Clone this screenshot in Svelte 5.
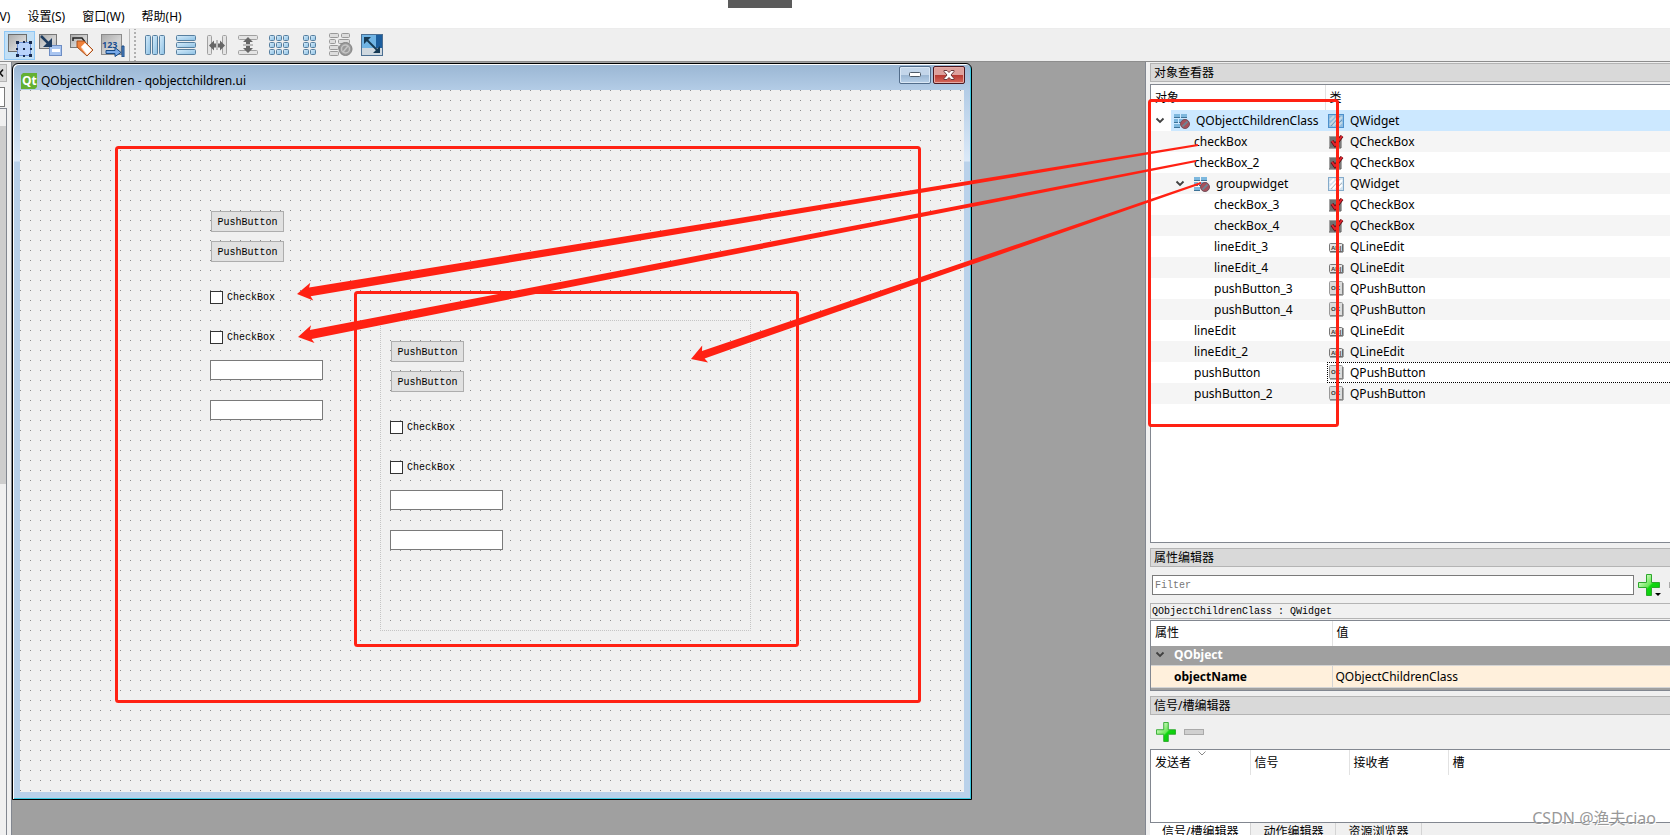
<script lang="ts">
  type Kind = 'widget' | 'check' | 'line' | 'push';
  type Row = { name: string; cls: string; kind: Kind; level: number; parent?: boolean };

  const menus = ['(V)', '设置(S)', '窗口(W)', '帮助(H)'];

  const rows: Row[] = [
    { name: 'QObjectChildrenClass', cls: 'QWidget', kind: 'widget', level: 0, parent: true },
    { name: 'checkBox', cls: 'QCheckBox', kind: 'check', level: 1 },
    { name: 'checkBox_2', cls: 'QCheckBox', kind: 'check', level: 1 },
    { name: 'groupwidget', cls: 'QWidget', kind: 'widget', level: 1, parent: true },
    { name: 'checkBox_3', cls: 'QCheckBox', kind: 'check', level: 2 },
    { name: 'checkBox_4', cls: 'QCheckBox', kind: 'check', level: 2 },
    { name: 'lineEdit_3', cls: 'QLineEdit', kind: 'line', level: 2 },
    { name: 'lineEdit_4', cls: 'QLineEdit', kind: 'line', level: 2 },
    { name: 'pushButton_3', cls: 'QPushButton', kind: 'push', level: 2 },
    { name: 'pushButton_4', cls: 'QPushButton', kind: 'push', level: 2 },
    { name: 'lineEdit', cls: 'QLineEdit', kind: 'line', level: 1 },
    { name: 'lineEdit_2', cls: 'QLineEdit', kind: 'line', level: 1 },
    { name: 'pushButton', cls: 'QPushButton', kind: 'push', level: 1 },
    { name: 'pushButton_2', cls: 'QPushButton', kind: 'push', level: 1 },
  ];

  const editTools = ['Edit Widgets', 'Edit Signals/Slots', 'Edit Buddies', 'Edit Tab Order'];
  const layoutTools = [
    'Lay Out Horizontally',
    'Lay Out Vertically',
    'Horizontal Splitter',
    'Vertical Splitter',
    'Lay Out in a Grid',
    'Form Layout',
    'Break Layout',
    'Adjust Size',
  ];

  let activeTool = $state('Edit Widgets');
  let selected = $state(0);
  let filter = $state('');
  let objectName = $state('QObjectChildrenClass');
  let tab = $state('信号/槽编辑器');

  // tapered arrow polygon, thin at the tail and wide at the head
  function arrow(tailX: number, tailY: number, tipX: number, tipY: number, thick: number) {
    const len = Math.hypot(tailX - tipX, tailY - tipY);
    const ux = (tailX - tipX) / len;
    const uy = (tailY - tipY) / len;
    const at = (along: number, side: number) =>
      `${(tipX + ux * along - uy * side).toFixed(1)},${(tipY + uy * along + ux * side).toFixed(1)}`;
    return [
      at(0, 0), at(15, -9), at(13, -thick / 2), at(len, -1),
      at(len, 1), at(13, thick / 2), at(15, 9),
    ].join(' ');
  }

  const arrows = [
    arrow(1198, 145, 297, 294, 9),
    arrow(1196, 161, 298, 337, 9),
    arrow(1201, 183, 691, 359, 8),
  ];
</script>

{#snippet plus(size: number)}
  <svg width={size} height={size} viewBox="0 0 22 22">
    <defs>
      <linearGradient id="green" x1="0" y1="0" x2="1" y2="1">
        <stop offset="0.2" stop-color="#c8f8b8" />
        <stop offset="0.5" stop-color="#6be85a" />
        <stop offset="0.56" stop-color="#10d810" />
        <stop offset="1" stop-color="#08c408" />
      </linearGradient>
    </defs>
    <path d="M8.5.5h5v8h8v5h-8v8h-5v-8h-8v-5h8z" fill="url(#green)" stroke="#2ca82c" />
  </svg>
{/snippet}

{#snippet chevron()}
  <svg class="chevron" width="10" height="8" viewBox="0 0 10 8">
    <path d="M1.5 1.500l3.5 3.500 3.500-3.500" fill="none" stroke="#404040" stroke-width="1.800" />
  </svg>
{/snippet}

{#snippet toolIcon(name: string)}
  <svg width="24" height="24" viewBox="0 0 24 24">
    {#if name === 'Edit Widgets'}
      <rect x="0.5" y="1.500" width="18" height="17" fill="url(#grey)" stroke="#6b6b6b" />
      <rect x="9.500" y="9.500" width="13" height="13" fill="#b9d3fb" stroke="#6f93d8" />
      <path d="M8 8h3v3h-3zM15 8h2v2h-2zM21 8h3v3h-3zM8 15h2v2h-2zM22 15h2v2h-2zM8 21h3v3h-3zM15 22h2v2h-2zM21 21h3v3h-3zM15 15h2v2h-2z" fill="#17294d" />
    {:else if name === 'Edit Signals/Slots'}
      <rect x="0.5" y="1.500" width="17" height="14" fill="url(#grey)" stroke="#777" />
      <rect x="10.500" y="12.500" width="12" height="10" fill="#a9c5f0" stroke="#6d8dc4" />
      <path d="M13 16h8v3h-8z" fill="#fff" />
      <path d="M2 3l9 9" stroke="#1e3c60" stroke-width="2.500" />
      <path d="M13 5v9H4z" fill="#1e3c60" />
    {:else if name === 'Edit Buddies'}
      <rect x="0.5" y="1.500" width="17" height="13" fill="url(#grey)" stroke="#777" />
      <path d="M3 8V5h9l3 4" fill="none" stroke="#222" stroke-width="1.500" />
      <path d="M7 8h7l9 9-6 6-10-9z" fill="#f0823c" stroke="#a8501c" />
      <path d="M11 14l4-4 7 7-5 5z" fill="#fff" stroke="#ffd0b0" />
    {:else if name === 'Edit Tab Order'}
      <rect x="0.500" y="1.500" width="20" height="20" fill="url(#grey)" stroke="#8b8b8b" />
      <text x="1" y="15" class="digits">123</text>
      <path d="M5 17.500h9v-3l6 5-6 4v-3H5z" fill="#78a9e8" stroke="#174a86" />
      <path d="M21 13h2v11h-2z" fill="#5c8dce" stroke="#174a86" />
    {:else if name === 'Lay Out Horizontally'}
      {#each [2.500, 9.500, 16.500] as x}
        <rect {x} y="2.500" width="5" height="19" rx="1" fill="url(#blue)" stroke="#577f9f" />
      {/each}
    {:else if name === 'Lay Out Vertically'}
      {#each [2.500, 9.500, 16.500] as y}
        <rect x="2.500" {y} width="19" height="5" rx="1" fill="url(#blue)" stroke="#577f9f" />
      {/each}
    {:else if name === 'Horizontal Splitter'}
      {#each [2.500, 17.500] as x}
        <rect {x} y="2.500" width="4" height="19" rx="1" fill="#e4e4e4" stroke="#a0a0a0" />
      {/each}
      <path d="M12 7v10" stroke="#888" />
      <path d="M4 12.500l5-5v3h2v4H9v3zM20 12.500l-5-5v3h-2v4h2v3z" fill="#666" />
    {:else if name === 'Vertical Splitter'}
      {#each [2.500, 17.500] as y}
        <rect x="2.500" {y} width="19" height="4" rx="1" fill="#e4e4e4" stroke="#a0a0a0" />
      {/each}
      <path d="M7 12h10" stroke="#888" />
      <path d="M12 4l5 5h-3v2h-4V9H7zM12 20l5-5h-3v-2h-4v2H7z" fill="#666" />
    {:else if name === 'Lay Out in a Grid'}
      {#each [2.500, 9.500, 16.500] as x}
        {#each [2.500, 9.500, 16.500] as y}
          <rect {x} {y} width="5" height="5" rx="1" fill="url(#blue)" stroke="#577f9f" />
        {/each}
      {/each}
    {:else if name === 'Form Layout'}
      {#each [2.500, 9.500, 16.500] as y}
        <rect x="5.500" {y} width="5" height="5" rx="1" fill="url(#blue)" stroke="#577f9f" />
        <rect x="12.500" {y} width="5" height="5" rx="1" fill="url(#blue)" stroke="#577f9f" />
      {/each}
    {:else if name === 'Break Layout'}
      {#each [0.5, 6.500, 12.500, 18.500] as y, i}
        <rect x="0.5" {y} width={i === 1 ? 6 : 9} height="4" rx="1" fill="#ddd" stroke="#999" />
        {#if i < 2}
          <rect x={i === 1 ? 9.500 : 12.500} {y} width={i === 1 ? 11 : 8} height="4" rx="1" fill="#ddd" stroke="#999" />
        {/if}
      {/each}
      <circle cx="16.500" cy="16" r="6.500" fill="#999" stroke="#848484" />
      <circle cx="16.500" cy="16" r="4" fill="none" stroke="#c4c4c4" stroke-width="1.500" />
      <path d="M14 19l5-6" stroke="#c4c4c4" stroke-width="1.500" />
    {:else}
      <rect x="1.500" y="1.500" width="21" height="21" fill="#cfd8df" stroke="#4c6f92" />
      <path d="M2 2h20v13h-6V2z" fill="#1c5e9e" />
      <path d="M2 2h14v13H2z" fill="#70b4e4" />
      <path d="M6 6l12 12" stroke="#173a54" stroke-width="1.800" />
      <path d="M4 4h7l-7 7zM20 20h-7l7-7z" fill="#173a54" />
    {/if}
  </svg>
{/snippet}

{#snippet layoutIcon()}
  <svg width="16" height="16" viewBox="0 0 16 16">
    <path d="M0 1h6v4H0zM7 1h6v4H7zM0 6h4v4H0zM5 6h8v4H5zM0 11h6v4H0z" fill="#3e7398" />
    <path d="M0 1h6v3H0zM7 1h6v3H7zM0 6h4v3H0zM5 6h8v3H5zM0 11h6v3H0z" fill="#7eb8de" />
    <circle cx="11" cy="11" r="4.500" fill="#a8505a" stroke="#74505c" />
    <path d="M8.500 13.500l5-5" stroke="#6c8494" stroke-width="1.800" />
  </svg>
{/snippet}

{#snippet classIcon(kind: Kind, active: boolean)}
  <svg width="16" height="16" viewBox="0 0 16 16">
    {#if kind === 'widget'}
      <rect x="0.5" y="1.500" width="15" height="13" fill={active ? '#8fbce0' : '#d4e4f0'} stroke={active ? '#4c90cc' : '#84aaca'} />
      <path d="M2 12l9-9M5 13l9-9M2 7l4-4M10 13l4-4" stroke={active ? '#c4d8e4' : '#fff'} stroke-width="2" />
      <path d="M3 13l9-10M8 13l6-6" stroke={active ? '#6f98b8' : '#b4b8bc'} />
    {:else if kind === 'check'}
      <path d="M1.500 2.500h11v11h-11z" fill="#707070" stroke="#a2a2a2" />
      <path d="M1 14h12V3" fill="none" stroke="#555" />
      <path d="M4 7l3 4 7-9" fill="none" stroke="#5a0d10" stroke-width="3.500" />
      <path d="M4 7l3 4 7-9" fill="none" stroke="#df2530" stroke-width="2" />
    {:else if kind === 'line'}
      <rect x="1.500" y="4.500" width="13" height="8" rx="1" fill="#e4e4e4" stroke="#777" />
      <path d="M2 13h13V5" fill="none" stroke="#555" />
      <text x="3" y="11" class="tiny">AB|</text>
    {:else}
      <rect x="1.500" y="0.5" width="13" height="13" rx="1" fill="#dcdcdc" stroke="#999" />
      <path d="M2 14h13V2" fill="none" stroke="#666" />
      <text x="3" y="9" class="tiny">OK</text>
    {/if}
  </svg>
{/snippet}

<!-- the widgets placed on the form; the same set appears in the form and in groupwidget -->
{#snippet widgets(prefix: string)}
  <button class="push first">PushButton</button>
  <button class="push second">PushButton</button>
  <label class="check third"><input type="checkbox" name="{prefix}1" />CheckBox</label>
  <label class="check fourth"><input type="checkbox" name="{prefix}2" />CheckBox</label>
  <input class="edit fifth" type="text" aria-label="{prefix} lineEdit" />
  <input class="edit sixth" type="text" aria-label="{prefix} lineEdit_2" />
{/snippet}

<svg class="shared" width="0" height="0" aria-hidden="true">
  <defs>
    <linearGradient id="blue" x1="0" y1="0" x2="1" y2="1">
      <stop offset="0" stop-color="#d6ecfa" />
      <stop offset="1" stop-color="#8cc0e4" />
    </linearGradient>
    <linearGradient id="grey" x1="0" y1="0" x2="1" y2="1">
      <stop offset="0" stop-color="#aaa" />
      <stop offset="0.6" stop-color="#d4d4d4" />
      <stop offset="1" stop-color="#bbb" />
    </linearGradient>
  </defs>
</svg>

<div class="app">
  <nav class="menubar">
    {#each menus as menu}
      <button>{menu}</button>
    {/each}
  </nav>
  <div class="grip"></div>

  <div class="toolbar">
    {#each editTools as tool}
      <button class="tool" class:on={activeTool === tool} aria-label={tool} onclick={() => (activeTool = tool)}>
        {@render toolIcon(tool)}
      </button>
    {/each}
    <span class="handle"></span>
    {#each layoutTools as tool}
      <button class="tool" aria-label={tool}>{@render toolIcon(tool)}</button>
    {/each}
  </div>

  <div class="main">
    <aside class="boxdock">
      <div class="boxtitle">
        <svg width="4" height="8" viewBox="0 0 4 8"><path d="M3 .5L0 4l3 3.500" fill="none" stroke="#111" stroke-width="1.500" /></svg>
      </div>
      <div class="boxfilter"></div>
      <div class="boxlist"><div class="thumb"></div></div>
    </aside>

    <section class="workspace">
      <div class="window">
        <header class="titlebar">
          <svg width="16" height="16" viewBox="0 0 16 16">
            <path d="M2 0h14v14l-2 2H0V2z" fill="#64b032" />
            <text x="1" y="12" class="qt">Qt</text>
          </svg>
          <h1>QObjectChildren - qobjectchildren.ui</h1>
          <button class="winbtn" aria-label="Minimize">
            <svg width="12" height="6"><rect x="0.5" y="0.5" width="11" height="4" rx="1" fill="#fff" stroke="#4d5a68" /></svg>
          </button>
          <button class="winbtn close" aria-label="Close">
            <svg width="12" height="10" viewBox="0 0 12 10"><path d="M1 .5h3l2 2 2-2h3v1L8 5l3 3.500v1H8l-2-2-2 2H1v-1L4 5 1 1.500z" fill="#fff" stroke="#6b3a3c" /></svg>
          </button>
        </header>
        <div class="form">
          {@render widgets('form')}
          <div class="group">{@render widgets('groupwidget')}</div>
        </div>
      </div>
    </section>

    <aside class="docks">
      <h2>对象查看器</h2>
      <div class="frame tree">
        <table>
          <colgroup><col class="objcol" /><col /></colgroup>
          <thead><tr><th>对象</th><th>类</th></tr></thead>
          <tbody>
            {#each rows as row, i}
              <tr class:selected={selected === i} class:focus={i === 12} onclick={() => (selected = i)}>
                <td>
                  <div class="name level{row.level}" class:parent={row.parent}>
                    {#if row.parent}{@render chevron()}{/if}
                    <span class="label">
                      {#if row.parent}{@render layoutIcon()}{/if}
                      {row.name}
                    </span>
                  </div>
                </td>
                <td><div class="cls">{@render classIcon(row.kind, selected === i)}{row.cls}</div></td>
              </tr>
            {/each}
          </tbody>
        </table>
      </div>

      <h2>属性编辑器</h2>
      <div class="filterbar">
        <input type="text" placeholder="Filter" aria-label="Filter" bind:value={filter} />
        <button class="icon add" aria-label="Add property">
          {@render plus(22)}
          <span class="caret"></span>
        </button>
        <button class="icon" aria-label="Remove property">
          <svg width="22" height="6"><rect x="0.5" y="0.5" width="21" height="5" fill="#d0d0d0" stroke="#aaa" /></svg>
        </button>
      </div>
      <div class="object">{objectName} : QWidget</div>
      <div class="frame props">
        <table>
          <colgroup><col class="propcol" /><col /></colgroup>
          <thead><tr><th>属性</th><th>值</th></tr></thead>
          <tbody>
            <tr class="category"><td colspan="2"><div>{@render chevron()}QObject</div></td></tr>
            <tr class="property"><td>objectName</td><td>{objectName}</td></tr>
          </tbody>
        </table>
      </div>

      <h2>信号/槽编辑器</h2>
      <div class="signalbar">
        <button class="icon" aria-label="Add connection">{@render plus(20)}</button>
        <button class="icon" aria-label="Remove connection">
          <svg width="20" height="6"><rect x="0.5" y="0.5" width="19" height="5" fill="#d0d0d0" stroke="#aaa" /></svg>
        </button>
      </div>
      <div class="frame signals">
        <table>
          <colgroup><col class="sigcol" /><col class="sigcol" /><col class="sigcol" /><col /></colgroup>
          <thead>
            <tr>
              <th>
                发送者
                <svg class="sort" width="8" height="5"><path d="M.5.5L4 4 7.500.5" fill="none" stroke="#888" /></svg>
              </th>
              <th>信号</th>
              <th>接收者</th>
              <th>槽</th>
            </tr>
          </thead>
        </table>
      </div>
      <div class="tabs">
        {#each ['信号/槽编辑器', '动作编辑器', '资源浏览器'] as name}
          <button class:current={tab === name} onclick={() => (tab = name)}>{name}</button>
        {/each}
      </div>
    </aside>
  </div>

  <svg class="notes" aria-hidden="true">
    <g fill="none" stroke="#ff2113" stroke-width="3">
      <rect x="116.500" y="147.500" width="803" height="554" rx="2" />
      <rect x="355.500" y="292.500" width="442" height="353" rx="2" />
      <rect x="1149.500" y="100.500" width="188" height="325" rx="2" />
    </g>
    {#each arrows as points}
      <polygon {points} fill="#ff2113" />
    {/each}
  </svg>
  <div class="watermark">CSDN @渔夫ciao</div>
</div>

<style>
  :global(body) {
    overflow: hidden;
  }

  .app {
    position: relative;
    display: flex;
    flex-direction: column;
    /* the window runs a little past the bottom of the viewport */
    height: calc(100vh + 11px);
    background: #f0f0f0;
    color: #000;
    font: 12px/16px 'Noto Sans', 'Noto Sans CJK SC', sans-serif;
  }

  .app * {
    box-sizing: border-box;
  }

  .shared {
    position: absolute;
  }

  svg {
    display: block;
    flex: none;
  }

  button {
    margin: 0;
    padding: 0;
    border: 0;
    background: none;
    color: inherit;
    font: inherit;
  }

  h1,
  h2 {
    margin: 0;
    font: inherit;
  }

  .menubar {
    display: flex;
    gap: 17px;
    flex: none;
    height: 29px;
    padding-top: 6px;
    background: #fff;
    border-bottom: 1px solid #ececec;
  }

  .menubar button:first-child {
    margin-left: -4px;
  }

  .grip {
    position: absolute;
    top: 0;
    left: 728px;
    width: 64px;
    height: 8px;
    background: #5b5b5b;
  }

  .toolbar {
    display: flex;
    align-items: center;
    flex: none;
    height: 32px;
    padding-left: 4px;
    background: #efefef;
  }

  .tool {
    display: flex;
    align-items: center;
    justify-content: center;
    width: 31px;
    height: 29px;
    border: 1px solid transparent;
  }

  .tool.on {
    background: #c2dff5;
    border-color: #90c8f6;
  }

  .handle {
    width: 10px;
    height: 32px;
    margin-left: 1px;
    border-left: 1px solid #bbb;
    background: linear-gradient(#b0b0b0 2px, transparent 2px) 4px 3px / 2px 4px repeat-y;
  }

  .digits {
    fill: #1c4f90;
    font: bold 9px 'Open Sans', sans-serif;
  }

  .tiny {
    fill: #333;
    font: bold 6px 'Liberation Sans', sans-serif;
  }

  .main {
    display: flex;
    flex: 1;
    min-height: 0;
    border-top: 1px solid #8d8d8d;
  }

  .boxdock {
    display: flex;
    flex-direction: column;
    flex: none;
    width: 7px;
    padding-top: 2px;
  }

  .boxtitle {
    display: flex;
    align-items: center;
    height: 18px;
    background: #d9d9d9;
    border: 1px solid #b4b4b4;
    border-left: 0;
  }

  .boxfilter {
    width: 5px;
    height: 20px;
    margin: 5px 0 1px;
    background: #fff;
    border: 1px solid #7a7a7a;
    border-left: 0;
  }

  .boxlist {
    flex: 1;
    padding-top: 17px;
    border: 1px solid #828790;
    border-left: 0;
  }

  .thumb {
    height: 358px;
    background: #cdcdcd;
  }

  .workspace {
    flex: 1;
    min-width: 0;
    margin-left: 4px;
    overflow: hidden;
    background: #a0a0a0;
    border: solid #828790;
    border-width: 0 1px;
  }

  .window {
    display: flex;
    flex-direction: column;
    width: 960px;
    height: 737px;
    margin-top: 1px;
    padding: 0 7px 7px 6px;
    background: linear-gradient(#9ab6d3, #b3cce6 26px, #dbe9f8 97px, #b9d1ea 98px);
    border: 1px solid #000;
    border-radius: 6px 6px 0 0;
    box-shadow: inset 1px 1px #fff, inset -1px -1px #3fc8e0;
  }

  .titlebar {
    display: flex;
    flex: none;
    align-items: center;
    height: 26px;
    padding-top: 8px;
    gap: 4px;
    padding-left: 2px;
  }

  .titlebar h1 {
    flex: 1;
  }

  .qt {
    fill: #fff;
    font: bold 12px 'Open Sans', sans-serif;
  }

  .winbtn {
    display: flex;
    align-items: center;
    justify-content: center;
    width: 32px;
    height: 18px;
    margin: 0 -1px 12px -1px;
    background: linear-gradient(#c3d6ea 50%, #9bb7d3 50%, #b8d0e8);
    border: 1px solid #526d8b;
    border-radius: 2px;
    box-shadow: inset 0 0 0 1px #d9e7f5;
  }

  .winbtn.close {
    background: linear-gradient(#dda09c 50%, #b73830 50%, #d5685c);
    border-color: #4c1820;
    box-shadow: inset 0 0 0 1px #e4aaa6;
  }

  /* free canvas of the form designer: 10px dotted grid, widgets at their geometry */
  .form {
    position: relative;
    flex: 1;
    margin-left: 1px;
    background:
      linear-gradient(90deg, transparent 1px, #f0f0f0 1px) 0 0 / 10px 10px,
      linear-gradient(#8c8c8c 1px, #f0f0f0 1px) 0 0 / 10px 10px;
    font: 10px/14px 'Liberation Mono', monospace;
  }

  .group {
    position: absolute;
    left: 360px;
    top: 230px;
    width: 371px;
    height: 311px;
    border: 1px dotted #c4c4c4;
  }

  .push,
  .check,
  .edit {
    position: absolute;
    left: 190px;
  }

  .group .push,
  .group .check,
  .group .edit {
    left: 9px;
    margin-top: -101px;
  }

  .push,
  .group .push {
    width: 73px;
    height: 21px;
    margin-left: 1px;
    padding-top: 2px;
    background: #e1e1e1;
    border: 1px solid #adadad;
  }

  .first {
    top: 121px;
  }

  .second {
    top: 151px;
  }

  .third {
    top: 201px;
  }

  .fourth {
    top: 241px;
  }

  .fifth {
    top: 270px;
  }

  .sixth {
    top: 310px;
  }

  .check {
    display: flex;
    align-items: flex-start;
    gap: 4px;
    height: 13px;
  }

  .check input {
    appearance: none;
    width: 13px;
    height: 13px;
    margin: 0;
    background: #fff;
    border: 1px solid #333;
  }

  .check input:checked {
    background: #333;
  }

  .edit {
    width: 113px;
    height: 20px;
    background: #fff;
    border: 1px solid #7a7a7a;
  }

  .docks {
    display: flex;
    flex-direction: column;
    flex: none;
    width: 524px;
    padding: 1px 0 0 4px;
  }

  h2 {
    flex: none;
    height: 19px;
    padding-left: 3px;
    background: #d9d9d9;
    border: 1px solid #b4b4b4;
    border-right: 0;
    line-height: 18px;
  }

  .frame {
    flex: none;
    background: #fff;
    border: 1px solid #828790;
    border-right: 0;
    overflow: hidden;
  }

  table {
    width: 100%;
    table-layout: fixed;
    border-collapse: collapse;
  }

  th,
  td {
    padding: 0;
    font-weight: normal;
    text-align: left;
  }

  th {
    position: relative;
    height: 25px;
    padding-left: 4px;
    border-right: 1px solid #e2e2e2;
  }

  th:last-child {
    border-right: 0;
  }

  .tree {
    flex: 1;
    margin: 2px 0 5px;
  }

  .objcol {
    width: 174px;
  }

  .tree tbody tr {
    height: 21px;
  }

  .tree tbody tr:nth-child(even) {
    background: #f5f5f5;
  }

  .name,
  .cls,
  .label {
    display: flex;
    align-items: center;
    height: 21px;
    white-space: nowrap;
  }

  .name.level1 {
    padding-left: 40px;
  }

  .name.level2 {
    padding-left: 60px;
  }

  .name.parent {
    padding-left: 4px;
  }

  .name.parent.level1 {
    padding-left: 24px;
  }

  .chevron {
    margin-right: 6px;
  }

  .label {
    flex: 1;
    gap: 6px;
    padding-left: 3px;
  }

  .cls {
    gap: 6px;
    padding-left: 3px;
  }

  .selected .label,
  .selected .cls {
    background: #cce8ff;
  }

  .focus .cls {
    margin-left: 2px;
    padding-left: 0;
    border: 1px dotted #000;
    border-right: 0;
  }

  .filterbar {
    display: flex;
    align-items: center;
    flex: none;
    gap: 4px;
    height: 36px;
    padding-left: 2px;
    overflow: hidden;
  }

  .filterbar input {
    flex: 1;
    min-width: 0;
    height: 20px;
    padding: 2px 2px 0;
    background: #fff;
    border: 1px solid #7a7a7a;
    font: 10px/14px 'Liberation Mono', monospace;
  }

  .filterbar input::placeholder {
    color: #777;
  }

  .icon {
    flex: none;
    position: relative;
  }

  .icon.add {
    margin-right: 5px;
  }

  .filterbar .icon:last-child {
    margin-right: -21px;
  }

  .caret {
    position: absolute;
    right: -1px;
    bottom: 0;
    border: 3px solid transparent;
    border-top-color: #000;
    border-bottom: 0;
  }

  .object {
    flex: none;
    height: 16px;
    padding-left: 1px;
    border: 1px solid #b4b4b4;
    border-right: 0;
    font: 10px/15px 'Liberation Mono', monospace;
  }

  .props {
    margin: 1px 0 5px;
    padding-bottom: 2px;
    background: #a0a0a0;
  }

  .props thead {
    background: #fff;
  }

  .propcol {
    width: 181px;
  }

  .category td {
    height: 20px;
    color: #fff;
    font-weight: bold;
  }

  .category div {
    display: flex;
    align-items: center;
    gap: 3px;
    padding-left: 4px;
  }

  .property td {
    height: 22px;
    padding-left: 3px;
    background: #fff0dc;
    border: solid #d4d4d4;
    border-width: 1px 0;
  }

  .property td:first-child {
    padding-left: 23px;
    border-right-width: 1px;
    font-weight: bold;
  }

  .signalbar {
    display: flex;
    align-items: center;
    flex: none;
    gap: 8px;
    height: 34px;
    padding: 0 0 0 6px;
  }

  .signals {
    height: 74px;
  }

  .sigcol {
    width: 99px;
  }

  .sort {
    position: absolute;
    top: 1px;
    left: 47px;
  }

  .tabs {
    display: flex;
    flex: none;
    height: 23px;
  }

  .tabs button {
    padding: 0 12px 6px;
    border-right: 1px solid #d4d4d4;
  }

  .tabs .current {
    background: #fff;
  }

  .notes {
    position: absolute;
    inset: 0;
    width: 100%;
    height: 100%;
    pointer-events: none;
  }

  .watermark {
    position: absolute;
    right: 14px;
    bottom: 16px;
    color: #999;
    font-size: 16px;
    line-height: 24px;
    text-shadow: 1px 1px #fff;
  }
</style>
